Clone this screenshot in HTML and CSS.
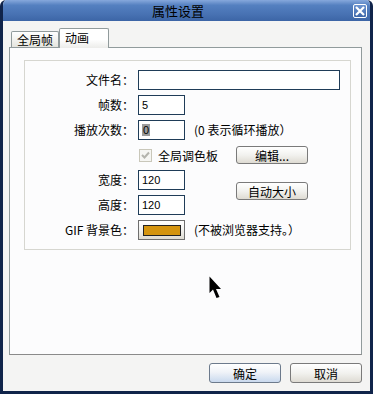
FILE: index.html
```
<!DOCTYPE html>
<html lang="zh-CN">

<head>
    <meta charset="UTF-8">
    <title>属性设置</title>
    <link rel="stylesheet" href="styles.css">
</head>

<body>

    <div class="window">
        <div class="titlebar">
            <span class="title">属性设置</span>
            <span class="close">
                <svg width="10" height="10" viewBox="0 0 10 10"><path d="M1 1 L9 9 M9 1 L1 9" stroke="#fff" stroke-width="2.2"/></svg>
            </span>
        </div>

        <div class="tabs">
            <div class="tab">全局帧</div>
            <div class="tab active">动画</div>
        </div>

        <div class="panel">
            <div class="group">
                <div class="lbl">文件名：</div>
                <div class="field wide"></div>

                <div class="lbl">帧数：</div>
                <div class="field">5</div>

                <div class="lbl">播放次数：</div>
                <div class="field"><span class="sel">0</span></div>
                <div class="note">(0 表示循环播放）</div>

                <div class="check-wrap">
                    <span class="check">
                        <svg width="9" height="9" viewBox="0 0 9 9"><path d="M1 4 L3.5 6.5 L8 1.5" fill="none" stroke="#b4b4ad" stroke-width="2"/></svg>
                    </span>
                    <span>全局调色板</span>
                </div>
                <button class="btn small">编辑...</button>

                <div class="lbl">宽度：</div>
                <div class="field">120</div>
                <button class="btn small auto">自动大小</button>

                <div class="lbl">高度：</div>
                <div class="field">120</div>

                <div class="lbl">GIF 背景色：</div>
                <button class="btn swatch-btn"><span class="swatch"></span></button>
                <div class="note">(不被浏览器支持。）</div>
            </div>
        </div>

        <div class="actions">
            <button class="btn default">确定</button>
            <button class="btn">取消</button>
        </div>

        <!-- mouse pointer -->
        <svg class="cursor" width="13" height="23" viewBox="0 0 13 23">
            <path d="M0.5 0.5 L0.5 17 L4 13.5 L7.5 22 L10.5 21 L7 13 L12 13 Z" fill="#000"/>
        </svg>
    </div>

</body>

</html>
```

FILE: styles.css
```
/* Basic Reset */

* {
    box-sizing: border-box;
    margin: 0;
    padding: 0;
}

body {
    font-family: "Noto Sans CJK SC", "Liberation Sans", sans-serif;
    font-size: 12px;
    color: #000;
    background: #fff;
}
/* Window frame */

.window {
    position: relative;
    width: 373px;
    height: 394px;
    display: flex;
    flex-direction: column;
    background: #f4f4f3;
    border: 3px solid #10244a;
    border-top: 0;
    border-radius: 6px 6px 0 0;
    overflow: hidden;
}

.titlebar {
    height: 21px;
    display: flex;
    align-items: center;
    background: linear-gradient(#86a8dc, #5480c0 25%, #4771b2 70%, #3c65a6);
}

.title {
    flex: 1;
    text-align: center;
    font-size: 13px;
    line-height: 21px;
}

.close {
    width: 14px;
    height: 14px;
    margin-right: 3px;
    display: flex;
    align-items: center;
    justify-content: center;
    border: 1px solid #fff;
    border-radius: 2px;
    background: linear-gradient(#6d94d0, #3d67aa);
}
/* Tabs */

.tabs {
    display: flex;
    align-items: flex-end;
    height: 26px;
    padding-left: 8px;
}

.tab {
    height: 16px;
    padding: 0 5px;
    line-height: 16px;
    border: 1px solid #919b9c;
    border-bottom: 0;
    border-radius: 2px 2px 0 0;
    background: linear-gradient(#ffffff, #f0f0ec 60%, #e4e4de);
}

.tab.active {
    width: 50px;
    height: 20px;
    padding-left: 5px;
    line-height: 17px;
    margin-bottom: -1px;
    position: relative;
    background: linear-gradient(#ffffff 55%, #ececea);
}
/* Main panel */

.panel {
    height: 308px;
    margin-left: 6px;
    width: 353px;
    border: 1px solid #919b9c;
    border-bottom-color: #8a8a8a;
    background: #fcfcfd;
}

.group {
    display: grid;
    grid-template-columns: 109px 47px 43px 72px 28px;
    grid-template-rows: repeat(7, 20px);
    column-gap: 4px;
    row-gap: 5px;
    align-items: center;
    margin: 12px 10px 0 14px;
    padding: 9px 0;
    border: 1px solid #d6d6d0;
}

.lbl {
    grid-column: 1;
    text-align: right;
    line-height: 20px;
}

.field {
    grid-column: 2;
    height: 20px;
    padding-left: 3px;
    border: 1px solid #1f3c58;
    background: #fff;
    font-family: "Liberation Sans", sans-serif;
    font-size: 11px;
    line-height: 18px;
}

.field.wide {
    grid-column: 2 / -1;
}

.sel {
    background: #9a9a9a;
    color: #000;
    padding: 0 1px;
}

.note {
    grid-column: 3 / -1;
    padding-left: 5px;
    white-space: nowrap;
    line-height: 20px;
}

.check-wrap {
    grid-column: 2 / 4;
    display: flex;
    align-items: center;
    gap: 6px;
    padding-left: 1px;
}

.check {
    width: 13px;
    height: 13px;
    display: flex;
    align-items: center;
    justify-content: center;
    border: 1px solid #c9c7ba;
    background: #f6f6f3;
}
/* Buttons */

.btn {
    height: 20px;
    border: 1px solid #7a7a7a;
    border-radius: 3px;
    background: linear-gradient(#ffffff, #f2f2ef 50%, #dedbd3);
    font-family: inherit;
    font-size: 12px;
    line-height: 17px;
    color: #000;
}

.btn.small {
    grid-column: 4;
    height: 18px;
    line-height: 15px;
}

.btn.auto {
    grid-row: 5 / 7;
    margin-top: -3px;
}

.swatch-btn {
    grid-column: 2;
    display: flex;
    align-items: center;
    justify-content: center;
    border-color: #6e6e6e;
    border-radius: 0;
}

.swatch {
    width: 38px;
    height: 11px;
    border: 1px solid #222;
    background: #d4940f;
}

.actions {
    display: flex;
    justify-content: flex-end;
    gap: 9px;
    margin-top: 8px;
    padding-right: 8px;
}

.actions .btn {
    width: 72px;
}

.btn.default {
    border-color: #6c7a8c;
    background: linear-gradient(#ffffff, #f0f3f8 45%, #c9d9ee);
}
/* Mouse pointer */

.cursor {
    position: absolute;
    left: 206px;
    top: 276px;
}
```
